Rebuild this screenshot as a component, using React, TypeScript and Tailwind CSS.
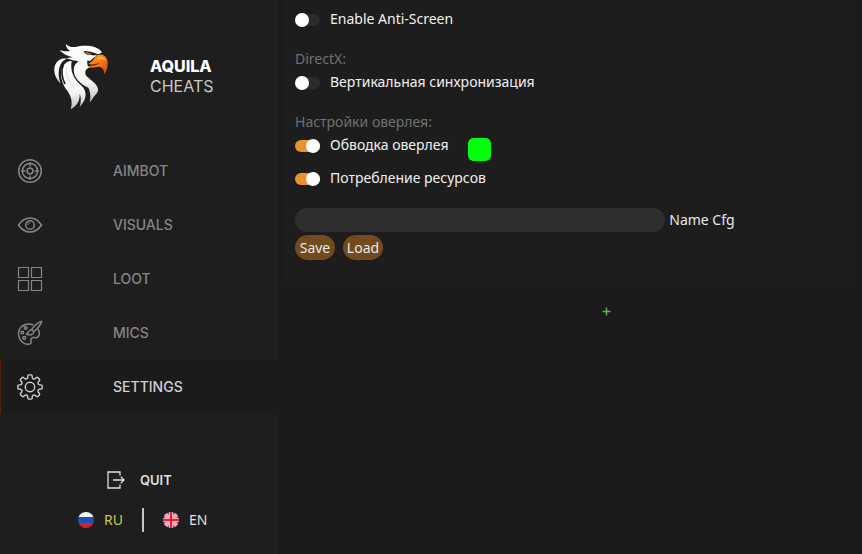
import { useState, type ReactNode } from "react";

function EagleLogo() {
  return (
    <svg viewBox="0 0 225 234" className="h-[78px] w-[75px] shrink-0" role="img" aria-label="Aquila Cheats logo">
      <defs>
        <linearGradient id="beak" x1="0" y1="0" x2="1" y2="1">
          <stop offset="0" stopColor="#ffa02a" />
          <stop offset="0.5" stopColor="#f57a17" />
          <stop offset="1" stopColor="#c8430c" />
        </linearGradient>
        <linearGradient id="plume" x1="0" y1="0" x2="0" y2="1">
          <stop offset="0" stopColor="#ffffff" />
          <stop offset="0.65" stopColor="#f4f4f4" />
          <stop offset="1" stopColor="#bdbdbd" />
        </linearGradient>
      </defs>
      <path
        d="M62 17C68 25 78 28 92 27C118 20 158 22 171 43L160 49C148 44 130 38 117 40L121 47L146 52L157 52C150 58 142 60 137 68L126 68C129 78 124 81 134 88C122 93 119 101 122 110C128 122 152 131 157 147C162 157 157 166 149 173C144 179 140 186 134 194C138 178 136 160 130 149C105 137 88 120 86 98C86 84 92 76 101 70C91 67 76 67 64 60L83 58C65 53 53 47 44 36C54 40 66 41 75 39C67 33 63 27 62 17Z"
        fill="url(#plume)"
      />
      <path d="M65 62C40 72 36 106 47 137C28 119 22 91 34 74C41 64 52 59 65 62Z" fill="url(#plume)" />
      <path
        d="M80 69C75 98 85 122 108 142C128 160 126 184 104 207C109 190 108 176 104 168C105 187 97 203 77 214C84 193 79 176 66 157C48 135 40 92 60 77C66 71 73 68 80 69Z"
        fill="url(#plume)"
      />
      <path d="M66 88C61 112 74 139 92 155" fill="none" stroke="#d2d2d2" strokeWidth="2" />
      <path d="M56 76C48 96 50 118 60 138" fill="none" stroke="#1e1e1e" strokeWidth="5" />
      <path d="M115 39L142 44L147 52L126 50Z" fill="#17120f" />
      <path d="M120 41L140 47L137 50L125 48Z" fill="#d98134" />
      <path
        d="M157 52C172 45 186 56 188 72C189 86 185 99 178 109C178 95 172 88 161 86C150 88 139 91 129 86L142 80L130 78C141 74 143 65 157 52Z"
        fill="url(#beak)"
      />
      <path d="M130 79C142 83 153 74 164 77C153 79 146 85 137 84" fill="#6c250c" />
      <path d="M158 57C168 53 177 57 182 66C173 61 165 65 158 66Z" fill="#ffb13d" />
    </svg>
  );
}

const lineIcon = "h-[26px] w-[26px] shrink-0";

function TargetIcon() {
  return (
    <svg viewBox="0 0 26 26" className={lineIcon} fill="none" stroke="currentColor" strokeWidth="1.5" aria-hidden="true">
      <circle cx="13" cy="13" r="11.3" />
      <circle cx="13" cy="13" r="7.6" />
      <circle cx="13" cy="13" r="2.9" />
      <path d="M13 4v4.500M13 17.500V22M4 13h4.500M17.500 13H22" />
    </svg>
  );
}

function EyeIcon() {
  return (
    <svg viewBox="0 0 26 26" className={lineIcon} fill="none" stroke="currentColor" strokeWidth="1.5" aria-hidden="true">
      <path d="M1.500 13C4.500 8.400 8.500 6 13 6s8.500 2.400 11.500 7C21.500 17.600 17.500 20 13 20S4.500 17.600 1.500 13Z" />
      <circle cx="13" cy="13" r="4.300" />
      <path d="M10.800 13a2.200 2.200 0 0 1 2.200-2.200" strokeWidth="1" />
    </svg>
  );
}

function GridIcon() {
  return (
    <svg viewBox="0 0 26 26" className={lineIcon} fill="none" stroke="currentColor" strokeWidth="1.200" aria-hidden="true">
      <path d="M1.500 1.500h10v10h-10zM14.500 1.500h10v10h-10zM1.500 14.500h10v10h-10zM14.500 14.500h10v10h-10z" />
    </svg>
  );
}

function PaletteIcon() {
  return (
    <svg viewBox="0 0 26 26" className={lineIcon} fill="none" stroke="currentColor" strokeWidth="1.500" strokeLinejoin="round" aria-hidden="true">
      <path d="M16.500 5C10.500 2.500 4 5 2 10.500C0 17 4.500 23.500 10.500 24.300C13 24.600 14.500 23.500 14 21.300C13.500 18.500 15 17 17.500 17.600C20.500 18.300 22.500 16.200 22.300 13C22.200 11.400 21.700 10 21 8.800" />
      <path d="M24.700 1.200C21.500 2.200 17.500 5.500 14.500 9.600L16.800 11.800C20.500 8.500 23.800 4.800 24.700 1.200Z" />
      <path d="M14.500 9.600C11.800 9.800 12 13 9.300 14C12.500 15.500 16.500 15 16.800 11.800" />
      <circle cx="8.700" cy="8" r="1.300" />
      <circle cx="5.300" cy="12.500" r="1.300" />
      <circle cx="7.300" cy="18" r="1.400" />
    </svg>
  );
}

// Outline of an eight-toothed cog centred on (13, 13).
function cogPath() {
  const at = (radius: number, degrees: number) => {
    const a = (degrees * Math.PI) / 180;
    return `${(13 + radius * Math.sin(a)).toFixed(2)} ${(13 - radius * Math.cos(a)).toFixed(2)}`;
  };
  let d = "";
  for (let tooth = 0; tooth < 8; tooth++) {
    const c = tooth * 45;
    d += `${tooth === 0 ? "M" : "L"}${at(9.6, c - 14)}L${at(11.2, c - 11)}Q${at(12.2, c - 10)} ${at(12.2, c - 6)}`;
    d += `L${at(12.2, c + 6)}Q${at(12.2, c + 10)} ${at(11.2, c + 11)}L${at(9.6, c + 14)}Q${at(8, c + 22.5)} ${at(9.6, c + 31)}`;
  }
  return d + "Z";
}

function GearIcon() {
  return (
    <svg viewBox="0 0 26 26" className={lineIcon} fill="none" stroke="currentColor" strokeWidth="1.400" strokeLinejoin="round" aria-hidden="true">
      <path d={cogPath()} />
      <circle cx="13" cy="13" r="4.700" />
    </svg>
  );
}

function QuitIcon() {
  return (
    <svg viewBox="0 0 18 18" className="h-[18px] w-[18px] shrink-0" fill="none" stroke="currentColor" strokeWidth="1.300" aria-hidden="true">
      <path d="M13 4.500V1H1v16h12v-3.500M6 9h11M13.800 5.800L17 9l-3.200 3.200" />
    </svg>
  );
}

function RussianFlag() {
  return (
    <svg viewBox="0 0 16 16" className="h-4 w-4 shrink-0" aria-hidden="true">
      <clipPath id="ruClip"><circle cx="8" cy="8" r="8" /></clipPath>
      <g clipPath="url(#ruClip)">
        <path d="M0 0h16v5H0z" fill="#f2f2f2" />
        <path d="M0 5h16v6H0z" fill="#1d50b0" />
        <path d="M0 11h16v5H0z" fill="#d81f2c" />
      </g>
    </svg>
  );
}

function BritishFlag() {
  return (
    <svg viewBox="0 0 16 16" className="h-4 w-4 shrink-0" aria-hidden="true">
      <clipPath id="ukClip"><circle cx="8" cy="8" r="8" /></clipPath>
      <g clipPath="url(#ukClip)">
        <path d="M0 0h16v16H0z" fill="#56508c" />
        <path d="M1 1l14 14M15 1L1 15" stroke="#f0a8b8" strokeWidth="4.500" />
        <path d="M8 0v16M0 8h16" stroke="#f8d2d8" strokeWidth="4" />
        <path d="M8 0v16M0 8h16" stroke="#e01f3c" strokeWidth="2.400" />
      </g>
    </svg>
  );
}

const menu = [
  { label: "AIMBOT", icon: <TargetIcon /> },
  { label: "VISUALS", icon: <EyeIcon /> },
  { label: "LOOT", icon: <GridIcon /> },
  { label: "MICS", icon: <PaletteIcon /> },
  { label: "SETTINGS", icon: <GearIcon /> },
];

function Toggle({ id, label, on = false, children }: { id: string; label: string; on?: boolean; children?: ReactNode }) {
  return (
    <div className="flex h-6 items-center">
      <input
        id={id}
        type="checkbox"
        defaultChecked={on}
        className="mt-[2px] flex h-3 w-[25px] shrink-0 appearance-none items-center rounded-full bg-[#2b2b2b] before:h-[14px] before:w-[14px] before:shrink-0 before:rounded-full before:bg-white checked:justify-end checked:bg-[#e8932f]"
      />
      <label htmlFor={id} className="pl-[10px] text-[#f0f0f0]">{label}</label>
      {children}
    </div>
  );
}

function Heading({ children }: { children: ReactNode }) {
  return <h2 className="mt-[17px] h-[22px] leading-[22px] text-[#707070]">{children}</h2>;
}

export default function App() {
  const [active, setActive] = useState("SETTINGS");
  const [lang, setLang] = useState("RU");

  return (
    <div className="relative flex min-h-screen bg-[#1b1b1b] font-['Noto_Sans','Open_Sans',sans-serif] text-sm text-[#e8e8e8]">
      <aside className="flex w-[278px] shrink-0 flex-col bg-[#1e1e1e] font-[Inter,sans-serif]">
        <header className="flex h-36 items-start gap-[30px] pt-[38px] pl-[45px]">
          <EagleLogo />
          <h1 className="pt-[18px] text-base leading-5">
            <span className="block font-extrabold text-white">AQUILA</span>
            <span className="block text-[#c8c8c8]">CHEATS</span>
          </h1>
        </header>

        <nav className="flex flex-col">
          {menu.map(({ label, icon }) => (
            <button
              key={label}
              type="button"
              onClick={() => setActive(label)}
              className={`flex h-[54px] items-center gap-[70px] border-l pl-4 font-medium ${
                active === label ? "border-[#54200f] bg-[#1b1b1b] text-[#d0d0d0]" : "border-[#241a18] text-[#858585]"
              }`}
            >
              {icon}
              {label}
            </button>
          ))}
        </nav>

        <footer className="mt-auto flex flex-col pb-[22px]">
          <button type="button" className="flex h-6 items-center gap-[15px] pl-[107px] text-[13px] font-semibold text-[#dedede]">
            <QuitIcon />
            QUIT
          </button>
          <div className="mt-4 flex h-6 items-center pl-[78px] font-['Noto_Sans','Open_Sans',sans-serif]">
            <button
              type="button"
              onClick={() => setLang("RU")}
              className={`flex w-16 items-center gap-[10px] ${lang === "RU" ? "text-[#c5cc4a]" : "text-[#e0e0e0]"}`}
            >
              <RussianFlag />
              RU
            </button>
            <span className="h-6 w-[2px] bg-[#c4c4c4]" />
            <button
              type="button"
              onClick={() => setLang("EN")}
              className={`flex items-center gap-[10px] pl-[19px] ${lang === "EN" ? "text-[#c5cc4a]" : "text-[#e0e0e0]"}`}
            >
              <BritishFlag />
              EN
            </button>
          </div>
        </footer>
      </aside>

      <main className="min-w-0 flex-1 px-[6px]">
        <form className="bg-[#1d1d1d] pt-[7px] pb-[22px] pl-[11px]" onSubmit={(e) => e.preventDefault()}>
          <Toggle id="anti-screen" label="Enable Anti-Screen" />
          <Heading>DirectX:</Heading>
          <Toggle id="vsync" label="Вертикальная синхронизация" />
          <Heading>Настройки оверлея:</Heading>
          <Toggle id="overlay-outline" label="Обводка оверлея" on>
            <input
              type="color"
              aria-label="Цвет обводки"
              defaultValue="#00ff0c"
              className="mt-[5px] ml-5 h-[23px] w-[23px] shrink-0 appearance-none self-start rounded-[5px] bg-transparent p-0 [&::-webkit-color-swatch]:rounded-[5px] [&::-webkit-color-swatch]:border-0 [&::-webkit-color-swatch-wrapper]:p-0"
            />
          </Toggle>
          <div className="mt-[9px]">
            <Toggle id="resources" label="Потребление ресурсов" on />
          </div>

          <div className="mt-[18px] flex items-center gap-1">
            <input id="cfg" type="text" className="h-6 w-[66%] rounded-full bg-[#2e2e2e] px-3 outline-none" />
            <label htmlFor="cfg">Name Cfg</label>
          </div>
          <div className="mt-[3px] flex gap-2">
            <button type="button" className="h-[25px] w-10 rounded-full bg-[#714b1e]">Save</button>
            <button type="button" className="h-[25px] w-10 rounded-full bg-[#714b1e]">Load</button>
          </div>
        </form>
      </main>

      <svg viewBox="0 0 9 9" className="pointer-events-none absolute top-[307px] left-[602px] h-[9px] w-[9px]" stroke="#58b544" strokeWidth="1.500" aria-hidden="true">
        <path d="M4.500 0.500v8M0.500 4.500h8" />
      </svg>
    </div>
  );
}
